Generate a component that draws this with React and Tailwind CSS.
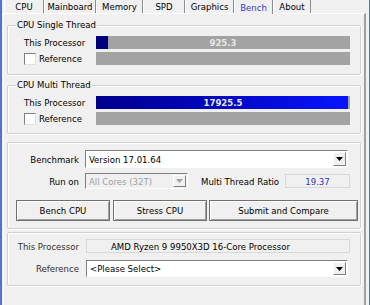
import React from 'react';

const tabs = [
  { label: 'CPU', w: 'w-[40px]' },
  { label: 'Mainboard', w: 'w-[52px]' },
  { label: 'Memory', w: 'w-[47px]' },
  { label: 'SPD', w: 'w-[42px]' },
  { label: 'Graphics', w: 'w-[49px]' },
  { label: 'Bench', w: 'w-[39px]', active: true },
  { label: 'About', w: 'w-[38px]' },
];

// etched group box, like the win32 one
const groupBox =
  'ml-[3px] w-[354px] rounded-[2px] border border-[#d0d0d0] shadow-[inset_1px_1px_0_#fff,1px_1px_0_#fff]';

function Arrow({ disabled }) {
  return (
    <div className="flex h-full w-[13px] items-center justify-center border border-t-white border-l-white border-r-[#808080] border-b-[#808080] bg-[#f0f0f0]">
      <svg width="7" height="4" viewBox="0 0 7 4">
        <path d="M0 0h7L3.5 4z" fill={disabled ? '#a0a0a0' : '#000'} />
      </svg>
    </div>
  );
}

function Combo({ className, value, disabled }) {
  return (
    <div
      className={`flex items-stretch p-[1px] border border-t-[#808080] border-l-[#808080] border-r-white border-b-white ${
        disabled ? 'bg-[#f0f0f0] text-[#a0a0a0]' : 'bg-white text-black'
      } ${className}`}
    >
      <div className="flex flex-1 items-center pl-[2px]">{value}</div>
      <Arrow disabled={disabled} />
    </div>
  );
}

function Bar({ value, multi }) {
  return (
    <div className="relative h-[13px] w-[254px] bg-[#a3a3a3]">
      {value && multi && (
        <div className="h-full w-[252px] bg-gradient-to-r from-[#00008c] to-[#0814ff]" />
      )}
      {value && !multi && <div className="h-full w-[12px] bg-[#00007f]" />}
      {value && (
        <span className="absolute inset-0 flex items-center justify-center font-bold text-[#e6e6e6]">
          {value}
        </span>
      )}
    </div>
  );
}

function BenchGroup({ title, value, multi, className }) {
  return (
    <div className={`${groupBox} ${className}`}>
      <span className="-mt-[7px] ml-[8px] block w-fit bg-[#f0f0f0] px-[1px] leading-[12px]">
        {title}
      </span>
      <div className="mt-[5px] flex flex-col gap-[3px]">
        <div className="flex h-[13px] items-center">
          <span className="w-[88px] pl-[16px]">This Processor</span>
          <Bar value={value} multi={multi} />
        </div>
        <div className="flex h-[13px] items-center">
          <div className="flex w-[88px] items-center pl-[16px]">
            <div className="h-[12px] w-[12px] border border-t-[#808080] border-l-[#808080] border-r-[#e0e0e0] border-b-[#e0e0e0] bg-white" />
            <span className="ml-[3px]">Reference</span>
          </div>
          <Bar />
        </div>
      </div>
    </div>
  );
}

function Button({ className, children }) {
  return (
    <div
      className={`flex h-[21px] items-center justify-center border border-[#707070] bg-[#f0f0f0] shadow-[inset_1px_1px_0_#fff,inset_-1px_-1px_0_#a0a0a0] ${className}`}
    >
      {children}
    </div>
  );
}

export default function App() {
  return (
    <div className="h-[305px] w-[370px] overflow-hidden border-l-2 border-r border-[#4f74d9] bg-[#f0f0f0] font-['DejaVu_Sans_Condensed','Liberation_Sans',sans-serif] text-[9.5px] leading-[13px] text-black">
      <div className="flex h-[13px] pl-[2px]">
        {tabs.map((t) => (
          <div
            key={t.label}
            className={`flex items-center justify-center border-l border-r border-l-white border-r-[#8c8c8c] ${t.w} ${
              t.active ? 'relative z-10 h-[14px] bg-[#f0f0f0] text-[#2d3ccf]' : 'h-[13px]'
            }`}
          >
            {t.label}
          </div>
        ))}
      </div>

      <div className="ml-[1px] h-[292px] w-[363px] border-t border-l border-r-2 border-t-white border-l-white border-r-[#a0a0a0]">
        <BenchGroup className="mt-[11px] pb-[9px]" title="CPU Single Thread" value="925.3" />
        <BenchGroup className="mt-[10px] pb-[8px]" title="CPU Multi Thread" value="17925.5" multi />

        <div className={`${groupBox} mt-[8px] pt-[7px] pb-[7px]`}>
          <div className="flex h-[18px] items-center">
            <span className="w-[71px] text-right">Benchmark</span>
            <Combo className="ml-[6px] h-full w-[263px]" value="Version 17.01.64" />
          </div>
          <div className="mt-[5px] flex h-[16px] items-center">
            <span className="w-[71px] text-right">Run on</span>
            <Combo className="ml-[6px] h-full w-[103px]" value="All Cores (32T)" disabled />
            <span className="ml-[13px] w-[84px]">Multi Thread Ratio</span>
            <div className="flex h-[14px] w-[65px] items-center justify-center border border-[#d8d8d8] text-[#3333cc]">
              19.37
            </div>
          </div>
          <div className="mt-[11px] flex pl-[8px]">
            <Button className="w-[94px]">Bench CPU</Button>
            <Button className="ml-[3px] w-[94px]">Stress CPU</Button>
            <Button className="ml-[2px] w-[149px]">Submit and Compare</Button>
          </div>
        </div>

        <div className={`${groupBox} mt-[3px] pt-[6px] pb-[8px]`}>
          <div className="flex h-[14px] items-center">
            <span className="w-[71px] text-right text-[#303030]">This Processor</span>
            <div className="ml-[7px] flex h-full w-[264px] items-center border border-[#d8d8d8] pl-[24px]">
              AMD Ryzen 9 9950X3D 16-Core Processor
            </div>
          </div>
          <div className="mt-[7px] flex h-[17px] items-center">
            <span className="w-[71px] text-right text-[#303030]">Reference</span>
            <Combo className="ml-[7px] h-full w-[262px]" value="<Please Select>" />
          </div>
        </div>
      </div>
    </div>
  );
}
